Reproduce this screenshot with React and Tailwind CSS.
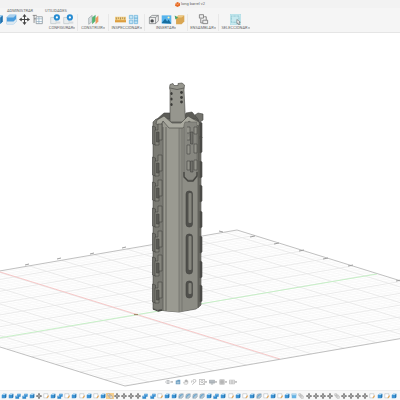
import React from "react";

const line = (a, b) => `M${a[0].toFixed(1)} ${a[1].toFixed(1)}L${b[0].toFixed(1)} ${b[1].toFixed(1)}`;
const mix = (a, b, t) => [a[0] + (b[0] - a[0]) * t, a[1] + (b[1] - a[1]) * t];
const B = [237, 230], L = [-157, 298], F = [125, 386], R = [520, 318];

function Grid() {
  const minor = [], major = [];
  for (let i = -60; i <= 60; i++) {
    const s = 0.61 + (i * 6.5) / 394;
    if (s > 0 && s < 1) (i % 5 ? minor : major).push(line(mix(B, L, s), mix(R, F, s)));
    const t = 0.495 + (i * 4.9) / 283;
    if (t > 0 && t < 1) (i % 5 ? minor : major).push(line(mix(B, R, t), mix(L, F, t)));
  }
  return (
    <g fill="none">
      <path d={minor.join("")} stroke="#f6f6f6" strokeWidth=".7" />
      <path d={major.join("")} stroke="#e3e3e3" strokeWidth=".7" />
      <path d="M-157 298L237 230L520 318L125 386Z" stroke="#b0b0b0" strokeWidth=".8" />
      <path d="M-3 271L280 359" stroke="#f6bcbc" strokeWidth=".8" />
      <path d="M-19 341L377 274" stroke="#bdf0bd" strokeWidth=".8" />
      <path d="M25 265l4-1M57 259l4-1M90 254l4-1M122 248l4-1M219 231l4 1M250 237l5-1M274 244l5-1M299 251l5-1M323 259l5-1M348 266l5-1M396 281l5-1" stroke="#a0a0a0" strokeWidth="1" />
      <path d="M134 314.500h4" stroke="#a58b6d" strokeWidth="1.2" />
    </g>
  );
}

function Model() {
  return (
    <g stroke="#454541" strokeWidth=".6" strokeLinejoin="round">
      <path d="M195 115l3-2 5 1v6l-3 2-4-2z" fill="#74746e" />
      <path d="M156 120l8-7h8v11h-14zM183 119l3-6 6-1 6 7 2 6-12 1z" fill="#5c5c57" />
      <path d="M153 122l3-3h40l5 5v181l-5 4-17 3-13-1-13-2z" fill="#7b7b74" />
      <path d="M170 84.500l3-1 1 2h4v-2l4-.5 2.500 2-.5 5 1.500 32h-15.500V90l-.5-2z" fill="#96968e" />
      <path d="M170 88q7 3 14 0" fill="none" />
      <g fill="#3a3a37" stroke="none">
        <ellipse cx="171.500" cy="93.500" rx="1.100" ry="1.500" /><ellipse cx="171.500" cy="99" rx="1.100" ry="1.500" /><ellipse cx="171.500" cy="104.500" rx="1.100" ry="1.500" />
        <ellipse cx="181.500" cy="92.500" rx="1.400" ry="1.400" /><ellipse cx="181.500" cy="97.500" rx="1.400" ry="1.400" /><ellipse cx="181.500" cy="102" rx="1.400" ry="1.400" />
      </g>
      <path d="M163 122l5 2h11v188l-13-1-3-1z" fill="#9a9a91" stroke="none" />
      <path d="M179 125l7-6 12 3v186l-19 4z" fill="#8d8d85" stroke="none" />
      <path d="M198 123l3 2v180l-3 3z" fill="#686862" stroke="none" />
      <path d="M157 120l7-4 8 7h9l7-7 5 3 6 3v4l-6-2-4-3-6 7h-14l-6-7-2 4-5-1z" fill="#a9a99f" />
      <path d="M163 127v183M166 127v184M198 126v182" fill="none" stroke="#5c5c57" strokeWidth=".8" />
      <path d="M179 128v184M182 128v183" fill="none" stroke="#6e6e67" strokeWidth=".7" />
      {[126, 157, 182, 208, 233, 257, 284].map((y) => (
        <g key={y} fill="#85857d">
          <path d={`M152.500 ${y}l3 1v18l-3-1z`} fill="#6f6f69" />
          <path d={`M155 ${y + 4}h3v-6h4v16h-3v5h-4z`} />
          <path d={`M156.500 ${y + 6}h2.500v10h-2.500z`} fill="#5a5a55" />
        </g>
      ))}
      <path d="M185 122h12v53l-4 5h-5l-4-4v-51z" fill="#878780" stroke="#66665f" />
      <path d="M187 127h3v6h-3M187 140h3v-6M194 127h3v7h-3zM187 145h3v9h-3zM194 144h3v9h-3zM187 161h3v9h-3zM194 160h3v10h-3z" fill="#94948c" />
      <path d="M190.500 132h2.500v12h-2.500zM190.500 161h2.500v11h-2.500z" fill="#70706a" />
      <path d="M184 172v5l4 4h5l4-5v-4" fill="none" strokeWidth="1.300" />
      {[122, 136, 161, 185, 211, 236, 261, 285].map((y) => <path key={y} d={`M200 ${y}l2 1v15l-2 1z`} fill="#4e4e4a" />)}
      {[[191, 36], [234, 40], [281, 17]].map(([y, h]) => (
        <g key={y}>
          <rect x="186" y={y} width="6.500" height={h} rx="3" fill="#50504c" />
          <rect x="188.500" y={y + 2} width="3" height={h - 6} rx="1" fill="#85857d" stroke="none" />
        </g>
      ))}
      <path d="M153 309l5 2 4-1" fill="none" strokeWidth="1.300" />
    </g>
  );
}

const art = {
  box: <><path d="M2 5l4-3h8v9l-3 3H2z" fill="#3e94d4" /><path d="M2 5l4-3h8l-3 3z" fill="#a9d4f2" /><path d="M11 5l3-3v9l-3 3z" fill="#2470aa" /></>,
  join: <><path d="M6 2h9v8h-4v5H1V7h5z" fill="#3189cc" /><path d="M7 3h6v3H7zM2 8h5v2H2z" fill="#83bfeb" /></>,
  sketch: <><path d="M2 2h11v11H2z" fill="#fff" stroke="#929ba2" /><path d="M9 14l1-3 4-5 2 2-4 5z" fill="#e6a34d" /></>,
  move: <><path d="M8 2v12M2 8h12" stroke="#444" strokeWidth="1.500" /><path d="M8 0l3 4H5zM8 16l3-4H5zM0 8l4-3v6zM16 8l-4-3v6z" fill="#444" /></>,
  fillet: <><path d="M2 14V8q0-6 6-6h6v8l-4 4z" fill="#b4c7d4" stroke="#718797" /><path d="M4 12q0-7 8-8" stroke="#4095ce" strokeWidth="2" fill="none" /></>,
  link: <path d="M2 2h5v5H2zM8 8h6v6H8zM7 5h4v3M5 7v4h3" fill="#ededed" stroke="#888" />,
  top: <><path d="M2 5h12v9H2z" fill="#65b3e4" /><path d="M2 2h12v4H2z" fill="#c8e5f7" stroke="#64a9d6" /></>,
  face: <><path d="M1 5l4-4h10v10l-4 4H1z" fill="#4a9ddd" /><path d="M1 5l4-4h10l-4 4H1z" fill="#a8cfec" /><path d="M1 11h10l4-4v4l-4 4H1z" fill="#dce8f0" /></>,
  params: <><path d="M1 2h6M3 2v11M3 7h4" stroke="#666" /><path d="M6 4h9v10H6z" fill="#fff" stroke="#79858c" /><path d="M6 7h9M6 11h9M10 4v10" stroke="#8aabc1" /></>,
  gear: <><path d="M1 5h8v9H1z" fill="#e9edef" stroke="#bac4c9" /><circle cx="10" cy="5" r="4.500" fill="#268bd1" /><circle cx="10" cy="5" r="1.600" fill="#fff" /><path d="M9 11h6v3H9z" fill="#d6dbde" /></>,
  planes: <><path d="M1 6l5-4v9l-5 4z" fill="#d9e0e2" stroke="#78868d" strokeWidth=".7" /><path d="M6 5l5-4v9l-5 5z" fill="#53b373" /><path d="M11 6l4-4v9l-4 4z" fill="#ed9b62" /></>,
  ruler: <><path d="M0 4h16v8H0z" fill="#f3ce81" /><path d="M0 9h16v3H0z" fill="#dd9d3f" /><path d="M2 5v3M5 5v2M8 5v3M11 5v2M14 5v3" stroke="#8d754a" /></>,
  measure: <><path d="M2 2h5v5H2zM2 9h5v5H2zM9 2h5v12H9z" fill="#c3e4f5" stroke="#65b0db" /><path d="M9 6h5M9 10h5" stroke="#479acb" /></>,
  part: <><path d="M2 5l4-3h9v8l-4 4H2z" fill="#eee" stroke="#73777a" /><path d="M2 5h9v9M11 5l4-3" stroke="#73777a" fill="none" /><circle cx="6" cy="10" r="2.500" fill="#4a4d50" /></>,
  picture: <><path d="M1 2h14v12H1z" fill="#57b4ed" /><path d="M1 13l5-6 3 4 2-3 4 6z" fill="#176e9e" /><circle cx="11" cy="5" r="1.500" fill="#fff3b4" /></>,
  package: <><path d="M3 5l3-3h9v9l-4 4H3z" fill="#d9a653" /><path d="M3 5l3-3h9l-4 3z" fill="#edcb85" /><path d="M1 2l5 3-4 3z" fill="#46a36d" /></>,
  assembly: <path d="M2 1h6v5H2zM4 7v6h3M7 9h7v5H7zM9 4h3v5" fill="#eee" stroke="#777" strokeWidth="1.200" />,
  select: <><path d="M0 0h16v16H0z" fill="#c7e9ef" stroke="#8acbd5" strokeWidth=".5" /><path d="M2 3h11v9H2z" fill="none" stroke="#57a5b4" strokeDasharray="1 1" /><path d="M10 8l5 4-2 .5 1 3-1.500.5-1-3-1.500 1z" fill="#fff" stroke="#444" strokeWidth=".7" /></>,
  orbit: <path d="M1 8q7-9 14 0q-7 9-14 0zM8 3v10M4 8h8" stroke="#8f9498" fill="none" strokeWidth="1.300" />,
  camera: <><path d="M2 4h4l1-2h7v12H2z" fill="#6a9cc0" /><path d="M4 7h8v5H4z" fill="#a9c6da" /></>,
  hand: <path d="M4 14L1 9l2-1 2 2V4h2v4-6h2v6-5h2v6-4h2v6l-2 3z" fill="#f2f2f2" stroke="#999" />,
  zoom: <path d="M9 10l-6 5M5 5a4 4 0 108 0 4 4 0 10-8 0M1 4v6" fill="none" stroke="#929292" strokeWidth="1.400" />,
  fit: <path d="M1 1h14v14H1zM5 7a3 3 0 106 0 3 3 0 10-6 0M10 10l3 3" fill="none" stroke="#8b8b8b" strokeWidth="1.400" />,
  screen: <path d="M1 3h14v8H1zM5 14h6M8 11v3" fill="#b3bac0" stroke="#7e868b" />,
  grid: <path d="M2 2h12v12H2zM6 2v12M10 2v12M2 6h12M2 10h12" fill="#ddd" stroke="#8b8b8b" />,
  views: <path d="M1 3h14v10H1zM8 3v10M1 8h14" fill="#eee" stroke="#8b8b8b" />,
};

function Icon({ name, className = "size-[11px]" }) {
  return <svg viewBox="0 0 16 16" fill="none" className={`${className} shrink-0`} aria-hidden="true">{art[name]}</svg>;
}

function Caret() {
  return <svg viewBox="0 0 4 4" className="size-0.5 shrink-0" aria-hidden="true"><path d="M0 1h4L2 4z" fill="#777" /></svg>;
}

const groups = [
  ["CONFIGURAR", ["gear", "gear"], "w-[31px]"],
  ["CONSTRUIR", ["planes"], "w-[31px]"],
  ["INSPECCIONAR", ["ruler", "measure"], "w-[36px]"],
  ["INSERTAR", ["part", "picture", "package"], "w-[43px]"],
  ["ENSAMBLAR", ["assembly"], "w-[31px]"],
  ["SELECCIONAR", ["select"], "w-[33px]"],
];

const B1 = "box", J = "join", S = "sketch", M = "move", K = "fillet", N = "link";
const timeline = [B1, B1, J, J, B1, M, S, B1, J, S, B1, S, B1, S, B1, "active", M, M, M, M, J, J, S, B1, B1, K, K, K, K, B1, J, B1, S, B1, S, B1, K, S, B1, S, B1, "top", N, M, M, M, M, N, M, M, M, M, S, B1, S, B1];

export default function App() {
  return (
    <div className="flex h-screen flex-col overflow-hidden bg-white font-[Roboto,'Noto_Sans',sans-serif] text-[#666]">
      <header className="shrink-0 border-b border-[#e5e5e5] bg-[#f5f5f5]">
        <div className="flex h-2 items-center justify-center gap-px bg-[#f2f2f2] pr-5">
          <svg viewBox="0 0 8 8" className="size-[5px]" aria-hidden="true"><path d="M1 2l3-2 4 2v4L4 8 0 6z" fill="#e66a24" /><path d="M1 2l3 2 3-2" stroke="#ffc195" fill="none" /></svg>
          <h1 className="text-[4px] leading-[8px]">long barrel v2</h1>
        </div>
        <nav className="flex h-[6px] items-center gap-3 pl-[7px] text-[4px] leading-[6px]">
          <button>ADMINISTRAR</button><button>UTILIDADES</button>
        </nav>
        <div className="flex h-[18px] items-start overflow-hidden">
          <div className="flex w-[47px] shrink-0 items-center gap-0.5">
            <button aria-label="Extruir" className="flex w-1 justify-end overflow-hidden"><Icon name="box" /></button>
            {["face", "move", "params"].map((n) => <button key={n} aria-label={n}><Icon name={n} /></button>)}
          </div>
          {groups.map(([label, icons, width]) => (
            <section key={label} className={`${width} flex shrink-0 flex-col items-center border-r border-[#e8e8e8] last:border-0`}>
              <div className="flex justify-center gap-0.5">
                {icons.map((n, i) => <button key={i} aria-label={`${label} ${i + 1}`}><Icon name={n} /></button>)}
              </div>
              <button className="flex items-center text-[4px] leading-[6px] whitespace-nowrap">{label}<Caret /></button>
            </section>
          ))}
        </div>
      </header>
      <main className="relative min-h-0 flex-1 overflow-hidden">
        <svg viewBox="0 33 400 357" preserveAspectRatio="xMidYMin slice" className="size-full" role="img" aria-label="long barrel v2">
          <Grid /><Model />
        </svg>
        <div className="absolute inset-x-0 bottom-1 flex items-center justify-center gap-0.5 pl-0.5">
          {["orbit", "camera", "hand", "zoom", "fit", "screen", "grid", "views"].map((n, i) => (
            <button key={n} aria-label={n} className="flex h-2 items-center"><Icon name={n} className="size-1.5" />{(i === 0 || i > 3) && <Caret />}</button>
          ))}
        </div>
      </main>
      <footer className="flex h-2.5 shrink-0 items-center overflow-hidden border-t border-[#eee] bg-[#f7f7f7] pr-[3px]">
        {timeline.map((n, i) => (
          <button key={i} aria-label={`Operación ${i + 1}`} className={`flex min-w-0 flex-1 justify-center ${n === "active" ? "bg-[#f7cf8e]" : ""}`}><Icon name={n === "active" ? "link" : n} className="size-1.5" /></button>
        ))}
      </footer>
    </div>
  );
}
